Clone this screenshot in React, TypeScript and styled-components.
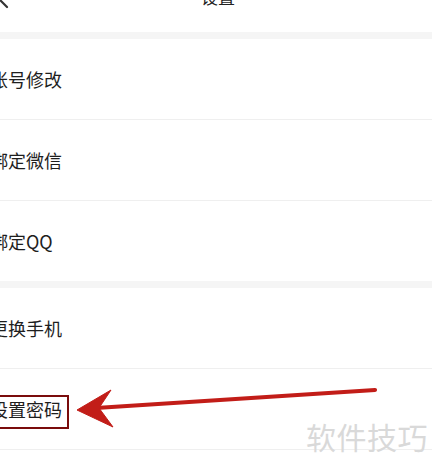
import React from 'react';
import styled, { createGlobalStyle } from 'styled-components';

const GlobalStyle = createGlobalStyle`
  html, body {
    margin: 0;
    padding: 0;
    background: #ffffff;
    overflow: hidden;
  }
  body {
    font-family: "Noto Sans CJK SC", "Noto Sans", sans-serif;
  }
`;

const Page = styled.div`
  position: relative;
  width: 432px;
  height: 469px;
  overflow: hidden;
  background: #ffffff;
`;

const Header = styled.div`
  display: grid;
  grid-template-columns: 1fr auto 1fr;
  align-items: start;
  height: 52px;
  margin-top: -20px;
  background: #ffffff;
`;

const BackButton = styled.div`
  display: flex;
  padding-top: 9px;
  margin-left: -2px;
  color: #333333;
`;

const Title = styled.div`
  padding: 7px 0 0 4px;
  font-size: 17px;
  line-height: 20px;
  color: #222222;
`;

const Band = styled.div`
  height: 7px;
  background: #f5f5f5;
`;

const Group = styled.div`
  display: flex;
  flex-direction: column;
`;

const Row = styled.div<{ $last?: boolean }>`
  position: relative;
  display: flex;
  align-items: center;
  height: 80px;
  border-bottom: ${({ $last }) => ($last ? 'none' : '1px solid #efefef')};
`;

const Label = styled.span`
  margin-left: -10px;
  font-size: 18px;
  line-height: 24px;
  color: #1e1e1e;
`;

const MarkBox = styled.div`
  position: absolute;
  left: -6px;
  top: 26px;
  width: 71px;
  height: 30px;
  border: 2.5px solid #7a0c0c;
`;

const ArrowLayer = styled.svg`
  position: absolute;
  left: 0;
  top: 0;
  pointer-events: none;
`;

const Watermark = styled.div`
  position: absolute;
  right: 4px;
  top: 418px;
  font-size: 30px;
  line-height: 36px;
  letter-spacing: 0.5px;
  color: #d9d9d9;
`;

const BackIcon = () => (
  <svg width="12" height="20" viewBox="0 0 12 20">
    <path d="M9 2 L1 10 L9 18" fill="none" stroke="currentColor" strokeWidth="2.2" strokeLinecap="round" strokeLinejoin="round" />
  </svg>
);

const Arrow = () => (
  <ArrowLayer width="432" height="80" viewBox="0 0 432 80">
    <path d="M375 21 L96 39" stroke="#c21d18" strokeWidth="4.2" strokeLinecap="round" />
    <path d="M77 41 L111 21 L99 39 L113 58 Z" fill="#c21d18" stroke="#c21d18" strokeWidth="1" strokeLinejoin="round" />
  </ArrowLayer>
);

const App = () => {
  return (
    <Page>
      <GlobalStyle />
      <Header>
        <BackButton>
          <BackIcon />
        </BackButton>
        <Title>设置</Title>
        <div />
      </Header>
      <Band />
      <Group>
        <Row>
          <Label>账号修改</Label>
        </Row>
        <Row>
          <Label>绑定微信</Label>
        </Row>
        <Row $last>
          <Label>绑定QQ</Label>
        </Row>
      </Group>
      <Band />
      <Group>
        <Row>
          <Label>更换手机</Label>
        </Row>
        <Row>
          <Label>设置密码</Label>
          <MarkBox />
          <Arrow />
        </Row>
      </Group>
      <Watermark>软件技巧</Watermark>
    </Page>
  );
};

export default App;
